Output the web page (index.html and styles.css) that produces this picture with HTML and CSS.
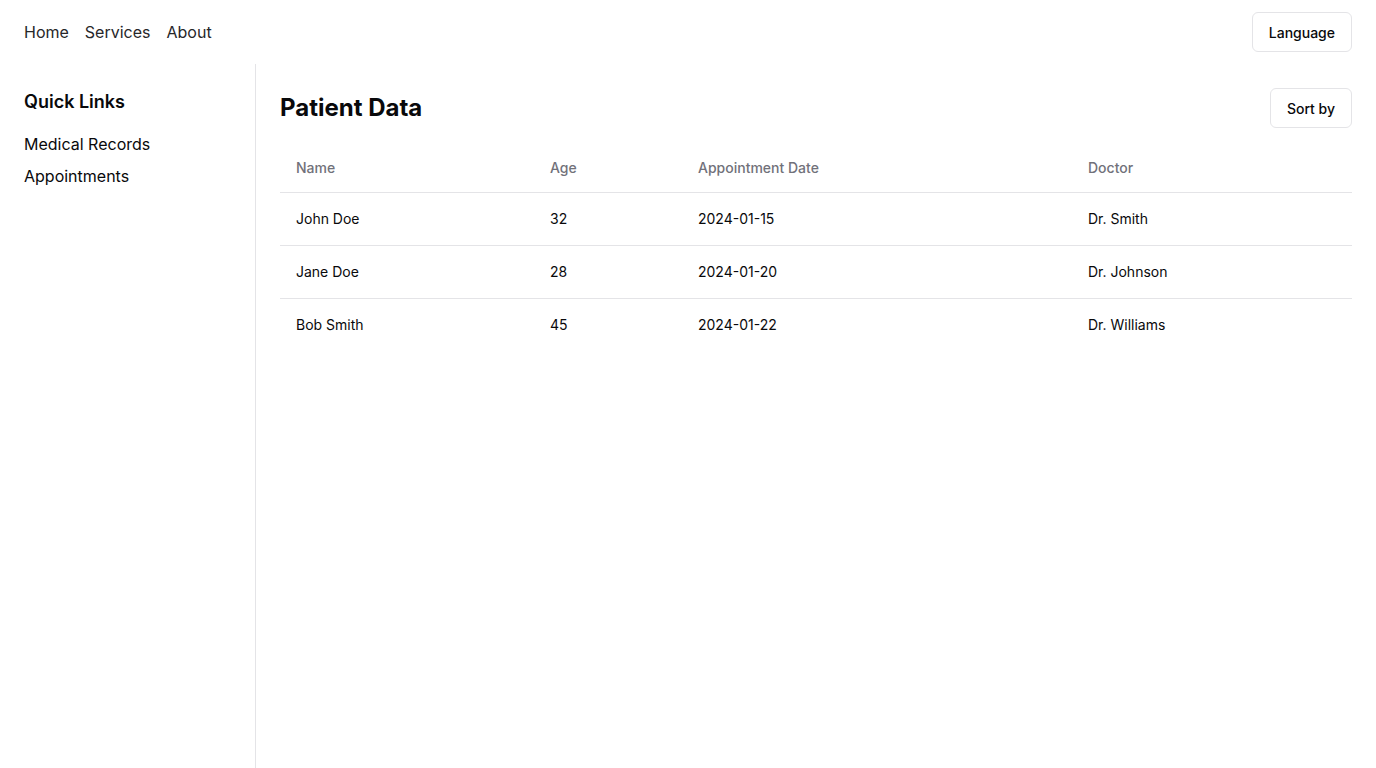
FILE: index.html
```html
<!DOCTYPE html>
<html lang="en">
<head>
<meta charset="utf-8">
<title>Patient Data</title>
<link rel="stylesheet" href="styles.css">
</head>
<body>
<header class="topbar">
  <nav class="nav">
    <a href="#" class="nav-link">Home</a>
    <a href="#" class="nav-link">Services</a>
    <a href="#" class="nav-link">About</a>
  </nav>
  <button class="btn">Language</button>
</header>
<div class="layout">
  <aside class="sidebar">
    <h2 class="side-title">Quick Links</h2>
    <ul class="side-list">
      <li><a href="#" class="side-link">Medical Records</a></li>
      <li><a href="#" class="side-link">Appointments</a></li>
    </ul>
  </aside>
  <main class="main">
    <div class="main-head">
      <h1 class="title">Patient Data</h1>
      <button class="btn">Sort by</button>
    </div>
    <table class="table">
      <colgroup>
        <col class="c-name"><col class="c-age"><col class="c-date"><col>
      </colgroup>
      <thead>
        <tr><th>Name</th><th>Age</th><th>Appointment Date</th><th>Doctor</th></tr>
      </thead>
      <tbody>
        <tr><td>John Doe</td><td>32</td><td>2024-01-15</td><td>Dr. Smith</td></tr>
        <tr><td>Jane Doe</td><td>28</td><td>2024-01-20</td><td>Dr. Johnson</td></tr>
        <tr><td>Bob Smith</td><td>45</td><td>2024-01-22</td><td>Dr. Williams</td></tr>
      </tbody>
    </table>
  </main>
</div>
</body>
</html>
```
FILE: styles.css
```css
* { box-sizing: border-box; }
html, body { margin: 0; padding: 0; }
body {
  font-family: Inter, "Liberation Sans", sans-serif;
  color: #09090b;
  background: #fff;
  height: 768px;
  display: flex;
  flex-direction: column;
}
a { text-decoration: none; color: inherit; }
.topbar {
  height: 64px;
  padding: 0 24px;
  display: flex;
  align-items: center;
  justify-content: space-between;
  flex-shrink: 0;
}
.nav { display: flex; gap: 16px; }
.nav-link { font-size: 16px; line-height: 24px; color: #27272a; }
.btn {
  font-family: inherit;
  height: 40px;
  padding: 0 16px;
  border: 1px solid #e4e4e7;
  border-radius: 6px;
  background: #fff;
  font-size: 14px;
  font-weight: 500;
  color: #09090b;
}
.layout { flex: 1; display: flex; min-height: 0; }
.sidebar {
  width: 256px;
  flex-shrink: 0;
  border-right: 1px solid #e4e4e7;
  padding: 24px;
}
.side-title { margin: 0 0 16px; font-size: 18px; line-height: 28px; font-weight: 600; }
.side-list { list-style: none; margin: 0; padding: 0; display: flex; flex-direction: column; gap: 8px; }
.side-link { font-size: 16px; line-height: 24px; }
.main { flex: 1; padding: 24px; }
.main-head { display: flex; align-items: center; justify-content: space-between; margin-bottom: 16px; }
.title { margin: 0; font-size: 24px; line-height: 32px; font-weight: 700; }
.table { width: 100%; border-collapse: collapse; font-size: 14px; line-height: 20px; table-layout: fixed; }
.c-name { width: 254px; }
.c-age { width: 148px; }
.c-date { width: 390px; }
.table th {
  height: 48px;
  padding: 0 16px;
  text-align: left;
  font-weight: 500;
  color: #71717a;
  border-bottom: 1px solid #e4e4e7;
}
.table td { padding: 16px; }
.table tbody tr { border-bottom: 1px solid #e4e4e7; }
.table tbody tr:last-child { border-bottom: none; }
```
